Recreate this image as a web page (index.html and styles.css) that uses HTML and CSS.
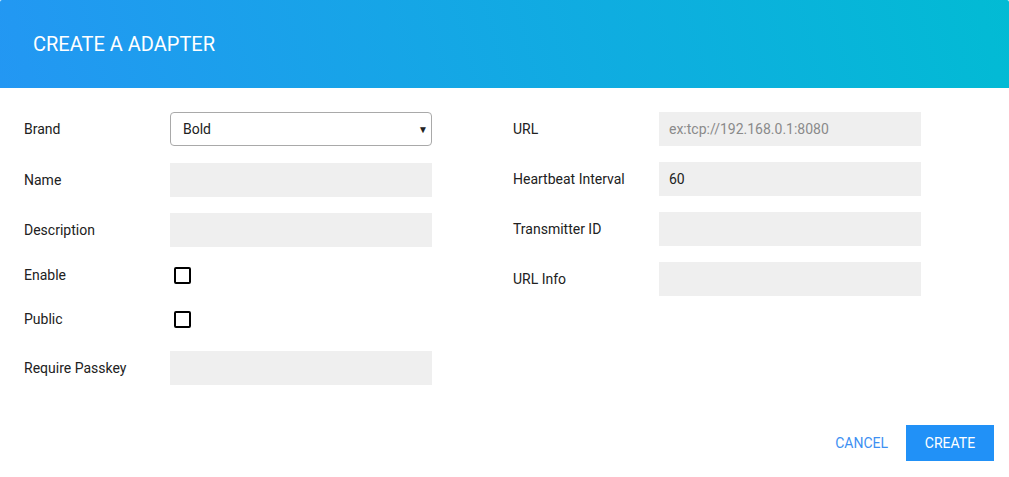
FILE: index.html
```html
<!DOCTYPE html>
<html lang="en">
<head>
    <meta charset="UTF-8">
    <meta name="viewport" content="width=device-width, initial-scale=1.0">
    <title>Create a Adapter</title>
    <link rel="stylesheet" href="styles.css">
</head>
<body>
<div class="dialog">
    <div class="dialog-header">
        <h2>Create a Adapter</h2>
    </div>
    <div class="dialog-body">
        <div class="column column-left">
            <div class="row">
                <label for="brand">Brand</label>
                <div class="select">
                    <span>Bold</span>
                    <span class="caret">&#9660;</span>
                </div>
            </div>
            <div class="row">
                <label for="name">Name</label>
                <input type="text" id="name">
            </div>
            <div class="row">
                <label for="description">Description</label>
                <input type="text" id="description">
            </div>
            <div class="row row-check first-check">
                <label for="enable">Enable</label>
                <input type="checkbox" id="enable">
            </div>
            <div class="row row-check last-check">
                <label for="public">Public</label>
                <input type="checkbox" id="public">
            </div>
            <div class="row">
                <label for="passkey">Require Passkey</label>
                <input type="text" id="passkey">
            </div>
        </div>
        <div class="column">
            <div class="row">
                <label for="url">URL</label>
                <input type="text" id="url" placeholder="ex:tcp://192.168.0.1:8080">
            </div>
            <div class="row">
                <label for="heartbeat">Heartbeat Interval</label>
                <input type="text" id="heartbeat" value="60">
            </div>
            <div class="row">
                <label for="transmitter">Transmitter ID</label>
                <input type="text" id="transmitter">
            </div>
            <div class="row">
                <label for="urlInfo">URL Info</label>
                <input type="text" id="urlInfo">
            </div>
        </div>
    </div>
    <div class="dialog-actions">
        <button class="btn btn-flat">Cancel</button>
        <button class="btn btn-primary">Create</button>
    </div>
</div>
</body>
</html>
```

FILE: styles.css
```css
body {
    margin: 0;
    font-family: Roboto, "Liberation Sans", Arial, sans-serif;
    font-size: 14px;
    color: #212121;
    background: #fff;
}
.dialog {
    width: 1009px;
    height: 477px;
    background: white;
    border-radius: 2px;
    overflow: hidden;
}
.dialog-header {
    height: 88px;
    padding: 0 33px;
    display: flex;
    align-items: center;
    background: linear-gradient(75deg, #2397f3, #02bbd4);
}
.dialog-header h2 {
    margin: 0;
    color: white;
    font-size: 20px;
    font-weight: 400;
    text-transform: uppercase;
}
.dialog-body {
    display: flex;
    gap: 81px;
    padding: 24px 24px 0;
    height: 313px;
}
.column {
    width: 408px;
}
.row {
    display: flex;
    align-items: center;
    height: 34px;
    margin-bottom: 16px;
}
.column-left .row:first-child {
    margin-bottom: 17px;
}
.row label {
    width: 146px;
    flex-shrink: 0;
}
.row input[type="text"], .select {
    width: 262px;
    height: 34px;
    box-sizing: border-box;
    border: none;
    background: #efefef;
    padding: 0 10px;
    font-family: inherit;
    font-size: 14px;
    color: #212121;
    outline: none;
}
.row input::placeholder {
    color: #8a8a8a;
}
.select {
    display: flex;
    align-items: center;
    justify-content: space-between;
    background: white;
    border: 1px solid #a9a9a9;
    border-radius: 4px;
    padding: 0 3px 0 12px;
}
.select .caret {
    font-size: 10px;
    color: #222;
}
.row-check {
    height: 28px;
    margin-bottom: 16px;
}
.first-check {
    margin-top: -2px;
}
.last-check {
    margin-bottom: 18px;
}
.row input[type="checkbox"] {
    appearance: none;
    width: 17px;
    height: 17px;
    margin: 0 0 0 4px;
    box-sizing: border-box;
    border: 2px solid #000;
    border-radius: 2px;
    background: white;
}
.dialog-actions {
    display: flex;
    justify-content: flex-end;
    align-items: center;
    padding: 0 15px 0 0;
}
.btn {
    height: 36px;
    padding: 0 18px;
    border: none;
    font-family: inherit;
    font-size: 14px;
    text-transform: uppercase;
    cursor: pointer;
    background: none;
}
.btn-flat {
    color: #3d8ff2;
}
.btn-primary {
    width: 88px;
    background: #2191f7;
    color: white;
}
```
